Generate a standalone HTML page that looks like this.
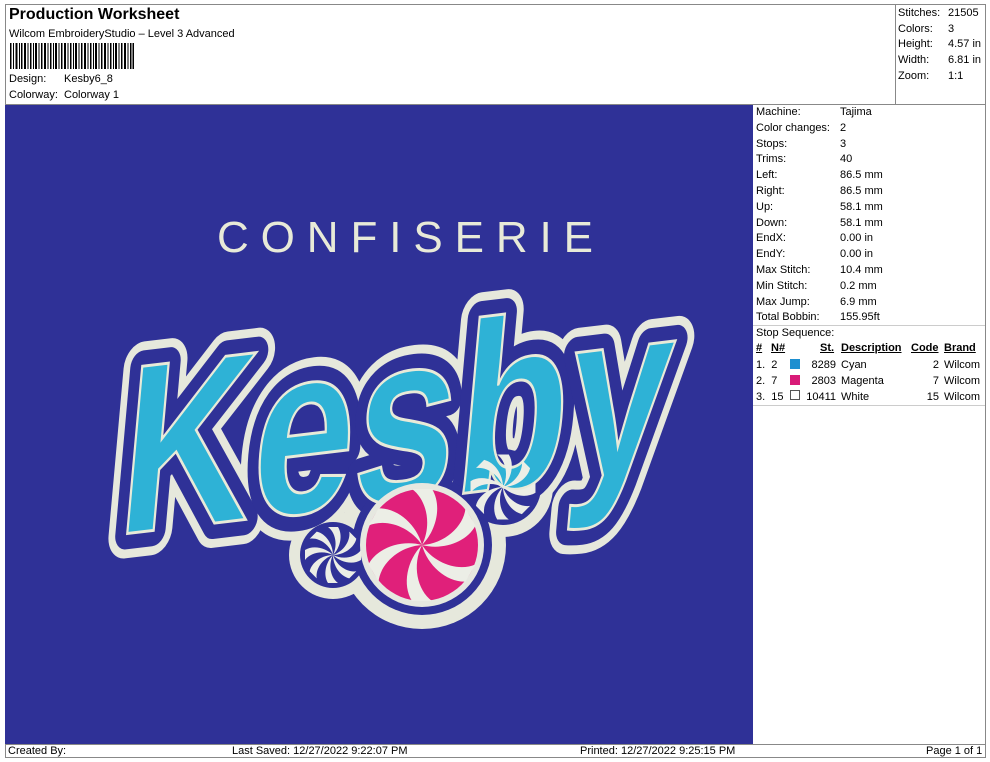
<!DOCTYPE html>
<html><head><meta charset="utf-8"><style>
*{margin:0;padding:0;box-sizing:border-box}
body{width:990px;height:762px;background:#fff;font-family:"Liberation Sans",Arial,sans-serif;color:#000;position:relative;overflow:hidden}
.a{position:absolute;white-space:nowrap}
.t{font-size:11px}
.line{position:absolute;background:#888}
</style></head><body>
<div class="line" style="left:5px;top:4px;width:980px;height:1px"></div>
<div class="line" style="left:5px;top:4px;width:1px;height:754px"></div>
<div class="line" style="left:985px;top:4px;width:1px;height:754px"></div>
<div class="line" style="left:895px;top:4px;width:1px;height:100px"></div>
<div class="line" style="left:5px;top:104px;width:980px;height:1px"></div>
<div class="line" style="left:5px;top:744px;width:980px;height:1px"></div>
<div class="line" style="left:5px;top:757px;width:980px;height:1px"></div>
<div class="a" style="left:9px;top:6px;font-size:16px;font-weight:bold">Production Worksheet</div>
<div class="a t" style="left:9px;top:28px">Wilcom EmbroideryStudio – Level 3 Advanced</div>
<svg class="a" style="left:10px;top:43px" width="124" height="26">
<g fill="#000">
<rect x="0" width="1.5" height="26"/><rect x="3" width="1" height="26"/><rect x="5.5" width="2" height="26"/><rect x="9" width="1" height="26"/><rect x="11" width="1.5" height="26"/><rect x="14" width="2" height="26"/><rect x="17.5" width="1" height="26"/><rect x="20" width="1.5" height="26"/><rect x="23" width="1" height="26"/><rect x="25" width="2" height="26"/><rect x="28.5" width="1" height="26"/><rect x="31" width="1.5" height="26"/><rect x="34" width="2" height="26"/><rect x="37.5" width="1" height="26"/><rect x="40" width="1.5" height="26"/><rect x="43" width="1" height="26"/><rect x="45" width="2" height="26"/><rect x="48.5" width="1" height="26"/><rect x="51" width="1.5" height="26"/><rect x="54" width="2" height="26"/><rect x="57.5" width="1" height="26"/><rect x="60" width="1.5" height="26"/><rect x="63" width="1" height="26"/><rect x="65" width="2" height="26"/><rect x="68.5" width="1" height="26"/><rect x="71" width="1.5" height="26"/><rect x="74" width="2" height="26"/><rect x="77.5" width="1" height="26"/><rect x="80" width="1.5" height="26"/><rect x="83" width="1" height="26"/><rect x="85" width="2" height="26"/><rect x="88.5" width="1" height="26"/><rect x="91" width="1.5" height="26"/><rect x="94" width="2" height="26"/><rect x="97.5" width="1" height="26"/><rect x="100" width="1.5" height="26"/><rect x="103" width="1" height="26"/><rect x="105" width="2" height="26"/><rect x="108.5" width="1" height="26"/><rect x="111" width="1.5" height="26"/><rect x="114" width="2" height="26"/><rect x="117.5" width="1" height="26"/><rect x="120" width="1.5" height="26"/><rect x="122.5" width="1.5" height="26"/>
</g></svg>
<div class="a t" style="left:9px;top:73px">Design:</div><div class="a t" style="left:64px;top:73px">Kesby6_8</div>
<div class="a t" style="left:9px;top:89px">Colorway:</div><div class="a t" style="left:64px;top:89px">Colorway 1</div>

<div class="a t" style="left:898px;top:6px;line-height:15.7px">Stitches:<br>Colors:<br>Height:<br>Width:<br>Zoom:</div>
<div class="a t" style="left:948px;top:6px;line-height:15.7px">21505<br>3<br>4.57 in<br>6.81 in<br>1:1</div>

<svg class="a" style="left:5px;top:105px" width="748" height="639" viewBox="5 105 748 639">
<defs>
<g id="word"><text x="0" y="0" font-family="Liberation Sans" font-weight="bold" font-size="245" textLength="540" lengthAdjust="spacingAndGlyphs">Kesby</text></g>
<path id="sw" d="M0,0 C10,-20 5,-45 -10,-56 L10,-56 C20,-40 15,-15 0,0Z"/>
</defs>
<rect x="5" y="105" width="748" height="639" fill="#2f3197"/>
<text x="217" y="252" font-family="Liberation Sans" font-size="44" fill="#e8ead8" textLength="376" lengthAdjust="spacing">CONFISERIE</text>
<g fill="#e6e8dc" stroke="#e6e8dc" stroke-width="50" stroke-linejoin="round">
<use href="#word" transform="translate(115,535) skewX(-12) rotate(-7)"/>
</g>
<g fill="#e6e8dc"><circle cx="422" cy="545" r="84"/><circle cx="503" cy="487" r="50"/><circle cx="333" cy="555" r="44"/></g>
<g fill="#2f3197" stroke="#2f3197" stroke-width="32" stroke-linejoin="round">
<use href="#word" transform="translate(115,535) skewX(-12) rotate(-7)"/>
</g>
<g fill="#2f3197"><circle cx="422" cy="545" r="70"/><circle cx="503" cy="487" r="38"/><circle cx="333" cy="555" r="33"/></g>
<g fill="#2eb2d6" stroke="#e8ead8" stroke-width="3">
<use href="#word" transform="translate(115,535) skewX(-12) rotate(-7)"/>
</g>
<g transform="translate(422,545)">
<circle r="62" fill="#e6e8e0"/>
<circle r="56" fill="#e0207a"/>
<g fill="#eceee6">
<use href="#sw"/><use href="#sw" transform="rotate(60)"/><use href="#sw" transform="rotate(120)"/><use href="#sw" transform="rotate(180)"/><use href="#sw" transform="rotate(240)"/><use href="#sw" transform="rotate(300)"/>
</g></g>
<g fill="#eceee6">
<g transform="translate(333,555) scale(0.5)">
<use href="#sw"/><use href="#sw" transform="rotate(45)"/><use href="#sw" transform="rotate(90)"/><use href="#sw" transform="rotate(135)"/><use href="#sw" transform="rotate(180)"/><use href="#sw" transform="rotate(225)"/><use href="#sw" transform="rotate(270)"/><use href="#sw" transform="rotate(315)"/>
</g>
<g transform="translate(503,487) scale(0.58)">
<use href="#sw"/><use href="#sw" transform="rotate(45)"/><use href="#sw" transform="rotate(90)"/><use href="#sw" transform="rotate(135)"/><use href="#sw" transform="rotate(180)"/><use href="#sw" transform="rotate(225)"/><use href="#sw" transform="rotate(270)"/><use href="#sw" transform="rotate(315)"/>
</g></g>
</svg>

<div class="a t" style="left:756px;top:105px;line-height:15.8px">Machine:<br>Color changes:<br>Stops:<br>Trims:<br>Left:<br>Right:<br>Up:<br>Down:<br>EndX:<br>EndY:<br>Max Stitch:<br>Min Stitch:<br>Max Jump:<br>Total Bobbin:<br>Stop Sequence:</div>
<div class="a t" style="left:840px;top:105px;line-height:15.8px">Tajima<br>2<br>3<br>40<br>86.5 mm<br>86.5 mm<br>58.1 mm<br>58.1 mm<br>0.00 in<br>0.00 in<br>10.4 mm<br>0.2 mm<br>6.9 mm<br>155.95ft</div>
<div class="line" style="left:753px;top:325px;width:232px;height:1px;background:#ccc"></div>
<div class="a t" style="left:756px;top:342px;font-weight:bold;text-decoration:underline">#</div>
<div class="a t" style="left:771px;top:342px;font-weight:bold;text-decoration:underline">N#</div>
<div class="a t" style="left:820px;top:342px;font-weight:bold;text-decoration:underline">St.</div>
<div class="a t" style="left:841px;top:342px;font-weight:bold;text-decoration:underline">Description</div>
<div class="a t" style="left:911px;top:342px;font-weight:bold;text-decoration:underline">Code</div>
<div class="a t" style="left:944px;top:342px;font-weight:bold;text-decoration:underline">Brand</div>
<div class="a t" style="left:756px;top:358px;line-height:15.8px">1.&nbsp; 2<br>2.&nbsp; 7<br>3.&nbsp; 15</div>
<div class="a" style="left:790px;top:359px;width:10px;height:10px;background:#1d8fd0"></div>
<div class="a" style="left:790px;top:375px;width:10px;height:10px;background:#d81b78"></div>
<div class="a" style="left:790px;top:390px;width:10px;height:10px;border:1px solid #555"></div>
<div class="a t" style="left:800px;top:358px;width:36px;text-align:right;line-height:15.8px">8289<br>2803<br>10411</div>
<div class="a t" style="left:841px;top:358px;line-height:15.8px">Cyan<br>Magenta<br>White</div>
<div class="a t" style="left:900px;top:358px;width:39px;text-align:right;line-height:15.8px">2<br>7<br>15</div>
<div class="a t" style="left:944px;top:358px;line-height:15.8px">Wilcom<br>Wilcom<br>Wilcom</div>
<div class="line" style="left:753px;top:405px;width:232px;height:1px;background:#ccc"></div>

<div class="a t" style="left:8px;top:745px">Created By:</div>
<div class="a t" style="left:232px;top:745px">Last Saved: 12/27/2022 9:22:07 PM</div>
<div class="a t" style="left:580px;top:745px">Printed: 12/27/2022 9:25:15 PM</div>
<div class="a t" style="left:926px;top:745px">Page 1 of 1</div>
</body></html>
